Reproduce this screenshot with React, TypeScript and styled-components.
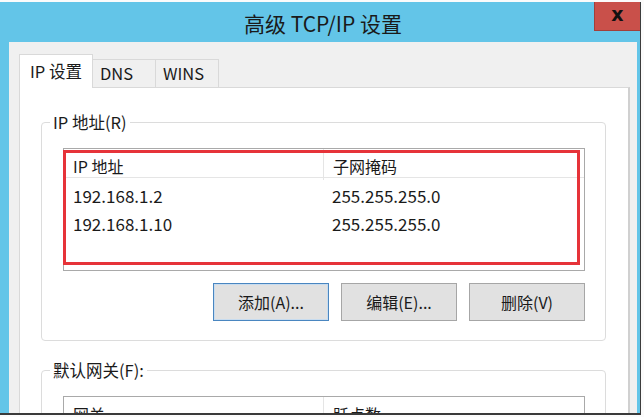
import React from "react";
import styled, { createGlobalStyle } from "styled-components";

const GlobalStyle = createGlobalStyle`
  html, body { margin: 0; padding: 0; background: #ffffff; overflow: hidden; }
  * { box-sizing: border-box; }
`;

const CJK = `"Noto Sans CJK SC", "Noto Sans", sans-serif`;

const Page = styled.div`
  width: 644px;
  height: 417px;
  padding-top: 2px;
  background: #fbfbfb;
  font-family: ${CJK};
  color: #1b1b1b;
`;

const Window = styled.div`
  width: 641px;
  height: 413px;
  display: flex;
  flex-direction: column;
  background-color: #63c5e8;
  border-right: 1px solid #3c3c3c;
  border-bottom: 2px solid #3a3a3a;
  overflow: hidden;
`;

const TitleBar = styled.div`
  height: 40px;
  flex: none;
  display: grid;
  grid-template-columns: 52px 1fr 46px;
  align-items: start;
  background-color: #63c5e8;
`;

const Title = styled.div`
  grid-column: 2;
  text-align: center;
  padding-top: 8px;
  font-size: 21px;
  line-height: 26px;
  color: #1a1a1a;
`;

const CloseButton = styled.button`
  grid-column: 3;
  width: 46px;
  height: 29px;
  margin: 0;
  padding: 0 0 4px 0;
  appearance: none;
  background-color: #c9504a;
  background-image: linear-gradient(#c9504a, #c9504a);
  border: none;
  border-left: 1px solid #a23f3a;
  border-bottom: 1px solid #a23f3a;
  border-radius: 0;
  display: flex;
  align-items: center;
  justify-content: center;
  font-family: "DejaVu Sans", sans-serif;
  font-weight: bold;
  font-size: 19px;
  line-height: 19px;
  color: #111111;
`;

const Body = styled.div`
  flex: 1;
  margin: 0 3px 0 9px;
  background: #f0f0f0;
  padding: 13px 7px 0 10px;
  display: flex;
  flex-direction: column;
  min-height: 0;
`;

const TabRow = styled.div`
  display: flex;
  align-items: flex-end;
  height: 33px;
  flex: none;
  position: relative;
  z-index: 1;
  margin-bottom: -1px;
`;

const Tab = styled.div<{ $active?: boolean }>`
  width: ${(p) => (p.$active ? 74 : 64)}px;
  height: ${(p) => (p.$active ? 34 : 29)}px;
  border: 1px solid #d9d9d9;
  border-bottom: ${(p) => (p.$active ? "none" : "1px solid #d9d9d9")};
  margin-left: ${(p) => (p.$active ? 0 : -1)}px;
  background: ${(p) => (p.$active ? "#ffffff" : "#f0f0f0")};
  font-size: 16.5px;
  line-height: 20px;
  padding: ${(p) => (p.$active ? "6px 0 0 10px" : "3px 0 0 7px")};
  color: #1a1a1a;
  white-space: nowrap;
  &:first-child { margin-left: 0; }
`;

const Pane = styled.div`
  flex: 1;
  background: #ffffff;
  border: 1px solid #d9d9d9;
  border-right: 2px solid #d0d0d0;
  border-bottom: none;
  padding: 23px 22px 0 21px;
  display: flex;
  flex-direction: column;
  min-height: 0;
`;

const Group = styled.fieldset<{ $gap?: number }>`
  margin: ${(p) => p.$gap ?? 0}px 0 0 0;
  padding: 15px 20px 19px 21px;
  border: 1px solid #dcdcdc;
  border-radius: 4px;
  min-width: 0;
  flex: none;
`;

const Legend = styled.legend`
  margin-left: -13px;
  padding: 0 3px;
  font-size: 16.5px;
  line-height: 22px;
  color: #1a1a1a;
`;

const ListWrap = styled.div`
  position: relative;
`;

const ListView = styled.div<{ $height: number }>`
  height: ${(p) => p.$height}px;
  border: 1px solid #a9a9a9;
  background: #ffffff;
`;

const Columns = styled.div`
  display: grid;
  grid-template-columns: 259px 1fr;
`;

const HeaderRow = styled(Columns)`
  height: 29px;
  border-bottom: 1px solid #e5e5e5;
`;

const HeaderCell = styled.div`
  font-size: 16px;
  line-height: 28px;
  padding: 3px 0 0 9px;
  color: #1a1a1a;
  & + & { border-left: 1px solid #e5e5e5; }
`;

const Rows = styled.div`
  padding-top: 4px;
`;

const Row = styled(Columns)`
  height: 28px;
`;

const Cell = styled.div`
  font-size: 17px;
  line-height: 28px;
  padding-left: 9px;
  color: #1a1a1a;
`;

const Highlight = styled.div`
  position: absolute;
  top: 2px;
  left: 0px;
  right: 5px;
  bottom: 6px;
  border: 3px solid #e63339;
  pointer-events: none;
`;

const ButtonRow = styled.div`
  display: flex;
  justify-content: flex-end;
  gap: 12px;
  margin-top: 12px;
`;

const Button = styled.div<{ $focused?: boolean }>`
  width: 116px;
  height: 38px;
  background: #e1e1e1;
  border: 1px solid ${(p) => (p.$focused ? "#4a86c0" : "#a6a6a6")};
  box-shadow: ${(p) => (p.$focused ? "inset 0 0 0 1px #c8dcef" : "none")};
  display: flex;
  align-items: center;
  justify-content: center;
  font-size: 16px;
  color: #1a1a1a;
`;

const addresses = [
  { ip: "192.168.1.2", mask: "255.255.255.0" },
  { ip: "192.168.1.10", mask: "255.255.255.0" },
];

export default function App() {
  return (
    <>
      <GlobalStyle />
      <Page>
        <Window>
          <TitleBar>
            <Title>高级 TCP/IP 设置</Title>
            <CloseButton type="button">x</CloseButton>
          </TitleBar>
          <Body>
            <TabRow>
              <Tab $active>IP 设置</Tab>
              <Tab>DNS</Tab>
              <Tab>WINS</Tab>
            </TabRow>
            <Pane>
              <Group>
                <Legend>IP 地址(R)</Legend>
                <ListWrap>
                  <ListView $height={123}>
                    <HeaderRow>
                      <HeaderCell>IP 地址</HeaderCell>
                      <HeaderCell>子网掩码</HeaderCell>
                    </HeaderRow>
                    <Rows>
                      {addresses.map((a) => (
                        <Row key={a.ip}>
                          <Cell>{a.ip}</Cell>
                          <Cell>{a.mask}</Cell>
                        </Row>
                      ))}
                    </Rows>
                  </ListView>
                  <Highlight />
                </ListWrap>
                <ButtonRow>
                  <Button $focused>添加(A)...</Button>
                  <Button>编辑(E)...</Button>
                  <Button>删除(V)</Button>
                </ButtonRow>
              </Group>
              <Group $gap={18}>
                <Legend>默认网关(F):</Legend>
                <ListWrap>
                  <ListView $height={80}>
                    <HeaderRow>
                      <HeaderCell>网关</HeaderCell>
                      <HeaderCell>跃点数</HeaderCell>
                    </HeaderRow>
                  </ListView>
                </ListWrap>
              </Group>
            </Pane>
          </Body>
        </Window>
      </Page>
    </>
  );
}
